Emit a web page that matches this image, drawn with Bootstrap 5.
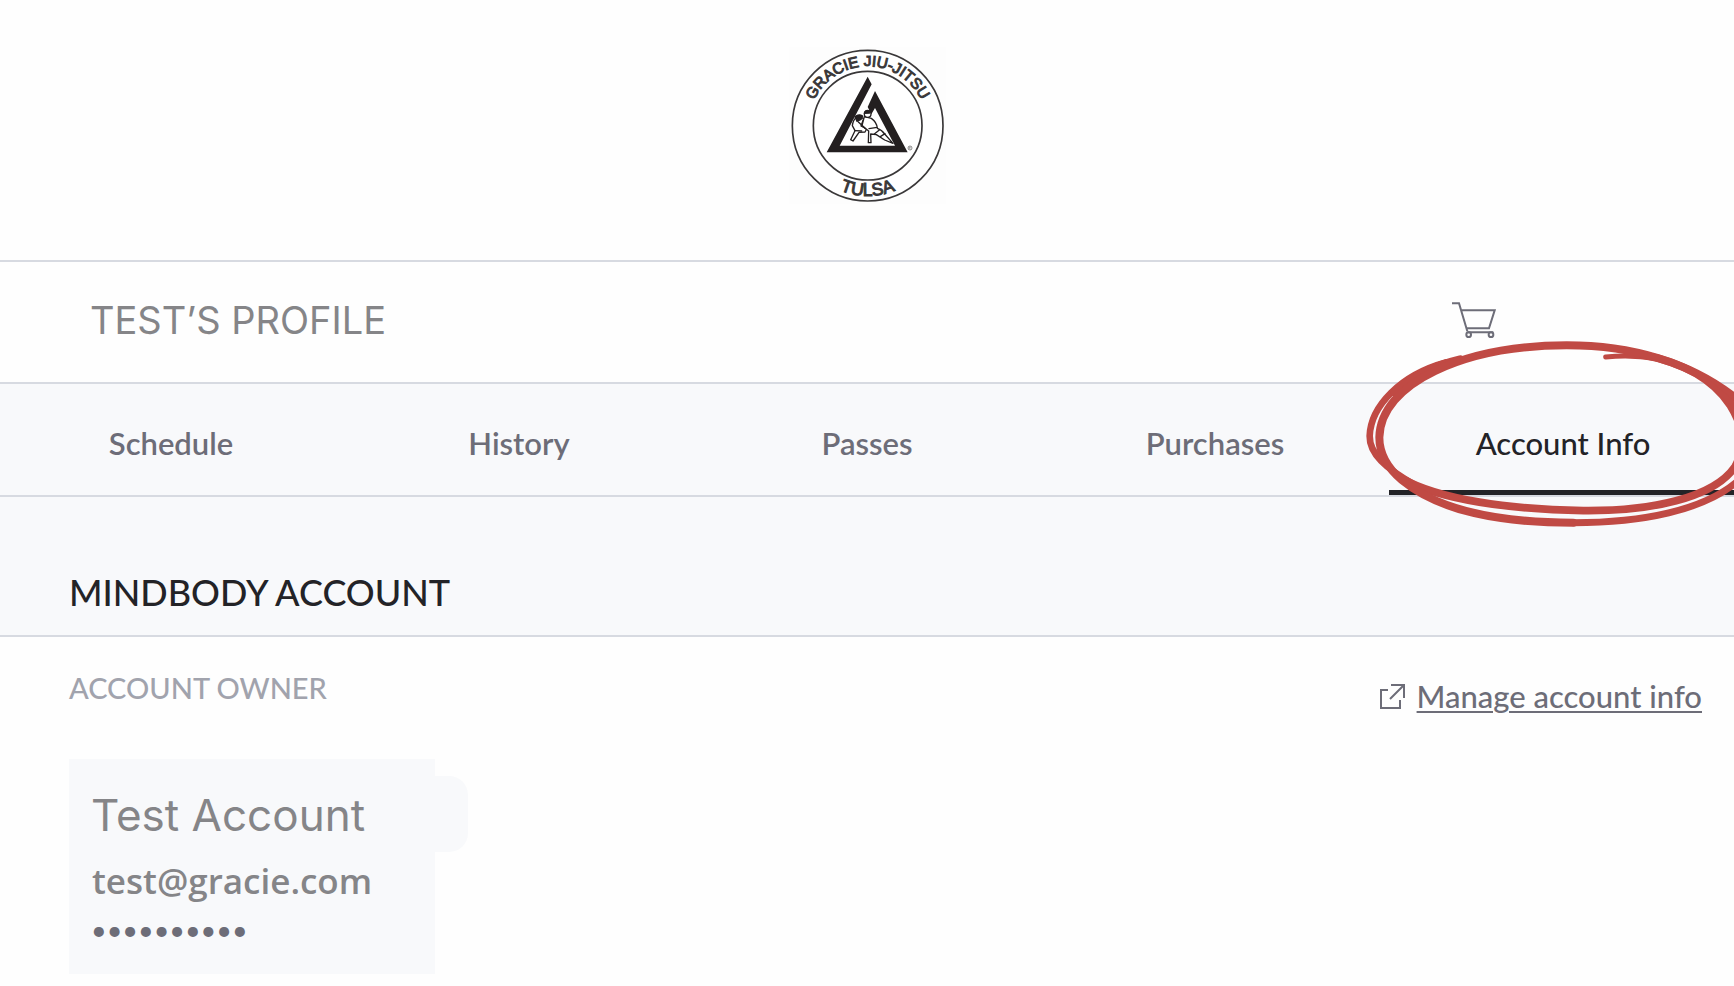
<!DOCTYPE html>
<html lang="en">
<head>
<meta charset="utf-8">
<meta name="viewport" content="width=device-width, initial-scale=1">
<title>Account Info</title>
<link href="https://cdn.jsdelivr.net/npm/bootstrap@5.3.0/dist/css/bootstrap.min.css" rel="stylesheet">
<style>
  :root { --line: #d7dae1; --panel: #f8f9fb; --ink: #232327; --slate: #6d6d78; --gray: #858588; }
  body { font-family: Lato, "Liberation Sans", sans-serif; color: var(--ink); background: #fefefe; }
  .page { overflow-x: hidden; min-height: 100vh; }
  .brand-bar { padding: 47px 0 56px; border-bottom: 2px solid var(--line); }
  .brand-bar svg { width: 157px; height: 157px; }
  .profile-bar { height: 122px; padding: 0 238px 5px 90px; border-bottom: 2px solid var(--line); }
  .profile-name { font: 400 38px/48px Inter, sans-serif; color: var(--gray); }
  .cart-link { width: 44px; height: 36px; color: var(--slate); }
  .tabs { margin: 0 -3px; border-bottom: 2px solid var(--line); background: var(--panel); }
  .tabs .nav-link { height: 111px; padding: 40px 0 0; font-size: 31px; line-height: 38px; font-weight: 600; color: var(--slate); }
  .tabs .nav-link.active { font-weight: 500; color: var(--ink); border-bottom: 5px solid var(--ink); }
  .scribble { position: absolute; left: -39px; top: -134px; width: 400px; height: 290px; pointer-events: none; z-index: 2; }
  .section-head { padding: 72px 69px 19px; background: var(--panel); border-bottom: 2px solid var(--line); }
  .section-head h1 { font-size: 36px; line-height: 47px; font-weight: 500; }
  .owner-row { padding: 33px 32px 44px 69px; }
  .owner-row h2 { font-size: 29px; line-height: 36px; font-weight: 500; color: #a1a3ad; }
  .manage { font-size: 31px; line-height: 38px; font-weight: 500; color: var(--slate); margin-top: 7px; gap: 12px; }
  .manage:hover { color: var(--ink); }
  .manage span { text-decoration: underline; text-decoration-thickness: 2px; text-underline-offset: 3px; }
  .owner-card { width: 366px; margin-left: 69px; padding: 17px 0 26px; background: var(--panel); }
  .owner-name { height: 76px; width: 399px; padding: 3px 22px 0; border-radius: 0 19px 19px 0; background: var(--panel); font: 400 44px/72px Inter, sans-serif; color: var(--gray); }
  .owner-mail { padding: 4px 23px 0; font: 600 35px/50px "Open Sans", sans-serif; color: var(--gray); }
  .owner-dots { padding: 6px 22px 0; font-size: 27px; line-height: 36px; color: var(--slate); }
</style>
<script src="https://cdn.jsdelivr.net/npm/bootstrap@5.3.0/dist/js/bootstrap.bundle.min.js"></script>
</head>
<body>
<div class="page">
  <header class="brand-bar d-flex justify-content-center">
    <svg viewBox="28 22 471 471" role="img" aria-label="Gracie Jiu-Jitsu Tulsa">
      <defs>
        <path id="arcTop" d="M86 258 A178 178 0 0 1 442 258"/>
        <path id="arcBottom" d="M53 258 A211 211 0 0 0 475 258"/>
      </defs>
      <rect x="28" y="22" width="471" height="471" fill="#fdfdfd"/>
      <circle cx="264" cy="258" r="226" fill="#fff" stroke="#3a3839" stroke-width="5"/>
      <circle cx="264" cy="258" r="163" fill="none" stroke="#3a3839" stroke-width="5"/>
      <g font-family="Liberation Sans, sans-serif" fill="#3a3839" stroke="#3a3839" stroke-width="3" text-anchor="middle">
        <text font-size="46"><textPath href="#arcTop" startOffset="50%">GRACIE JIU-JITSU</textPath></text>
        <text font-size="53"><textPath href="#arcBottom" startOffset="50%">TULSA</textPath></text>
      </g>
      <path fill="#231f20" d="M264 111 L276 134 L180 318 H346 L286 205 L275 224 L264 202 L286 154 L384 338 H141 Z"/>
      <g fill="#fff" stroke="#231f20" stroke-width="4" stroke-linejoin="round" stroke-linecap="round">
        <path d="M234 228 Q220 240 218 258 L226 273 L213 300 L220 304 L238 278 L256 277 L261 268 L244 259 L252 237 Z"/>
        <path d="M254 231 L275 236 Q292 248 293 266 Q306 270 315 283 L340 311 L315 301 L290 285 L273 283 L274 309 L266 309 L267 274 L247 258 Z"/>
        <path fill="#231f20" d="M226 231 Q237 221 249 229 L244 239 L232 245 Z"/>
        <path fill="none" d="M236 247 L258 267 M226 273 L246 274 M268 267 L292 263 M283 284 L299 271 M302 291 L316 282"/>
        <circle cx="264" cy="223" r="10"/>
        <path fill="#231f20" d="M254 221 Q257 208 272 214 L270 220 Z"/>
      </g>
      <circle cx="391" cy="325" r="6" fill="none" stroke="#555" stroke-width="2"/>
      <path d="M389 328 V322 H392 V325 H389 L393 328" fill="none" stroke="#555" stroke-width="1"/>
    </svg>
  </header>

  <div class="profile-bar d-flex align-items-center justify-content-between">
    <div class="profile-name">TEST’S PROFILE</div>
    <a href="#cart" class="cart-link d-block" aria-label="Cart">
      <svg class="d-block" width="44" height="36" viewBox="0 0 132 108" fill="none" stroke="currentColor" stroke-width="6">
        <path d="M0 4 H21 L46 88 M27 25 H128 L111 79 H44 M46 91 H124"/>
        <circle cx="50" cy="98" r="7"/><circle cx="117" cy="98" r="7"/>
      </svg>
    </a>
  </div>

  <nav class="tabs nav nav-justified flex-nowrap" aria-label="Profile">
    <div class="nav-item w-100"><a class="nav-link" href="#schedule">Schedule</a></div>
    <div class="nav-item w-100"><a class="nav-link" href="#history">History</a></div>
    <div class="nav-item w-100"><a class="nav-link" href="#passes">Passes</a></div>
    <div class="nav-item w-100"><a class="nav-link" href="#purchases">Purchases</a></div>
    <div class="nav-item w-100 position-relative">
      <a class="nav-link active" aria-current="page" href="#account">Account Info</a>
      <svg class="scribble" viewBox="0 0 1200 870" fill="none" stroke="#c04a44" stroke-linecap="round" stroke-linejoin="round" aria-hidden="true">
        <path stroke-width="15" d="M767 321 C850 313 930 322 1000 350"/>
        <path stroke-width="23" d="M880 315 C1010 340 1090 390 1140 465 C1180 530 1190 585 1155 650 C1090 745 900 784 700 782 C480 778 270 750 155 685"/>
        <path stroke-width="20" d="M200 708 C105 655 58 610 59 558 C62 470 150 375 290 337"/>
        <path stroke-width="24" d="M134 428 C185 378 245 348 330 328"/>
        <path stroke-width="24" d="M670 818 C450 818 270 785 155 690 C108 650 88 610 88 562 C92 400 340 286 650 286 C840 286 1020 335 1160 447"/>
        <path stroke-width="21" d="M1160 447 C1235 520 1230 630 1160 696 C1060 780 880 818 670 818"/>
        <path stroke-width="16" d="M1060 385 C1100 420 1130 440 1165 478"/>
      </svg>
    </div>
  </nav>

  <main>
    <div class="section-head"><h1 class="m-0">MINDBODY ACCOUNT</h1></div>
    <div class="owner-row d-flex justify-content-between align-items-start">
      <h2 class="m-0">ACCOUNT OWNER</h2>
      <a class="manage d-flex align-items-center text-decoration-none" href="#manage">
        <svg width="25" height="25" viewBox="0 0 25 25" fill="none" stroke="currentColor" stroke-width="2" aria-hidden="true">
          <path d="M8 6 H1 V24 H20 V16 M11 1 H24 V14 M24 1 L10 15"/>
        </svg>
        <span>Manage account info</span>
      </a>
    </div>
    <section class="owner-card">
      <div class="owner-name">Test Account</div>
      <div class="owner-mail">test@gracie.com</div>
      <div class="owner-dots">••••••••••</div>
    </section>
  </main>
</div>
</body>
</html>
